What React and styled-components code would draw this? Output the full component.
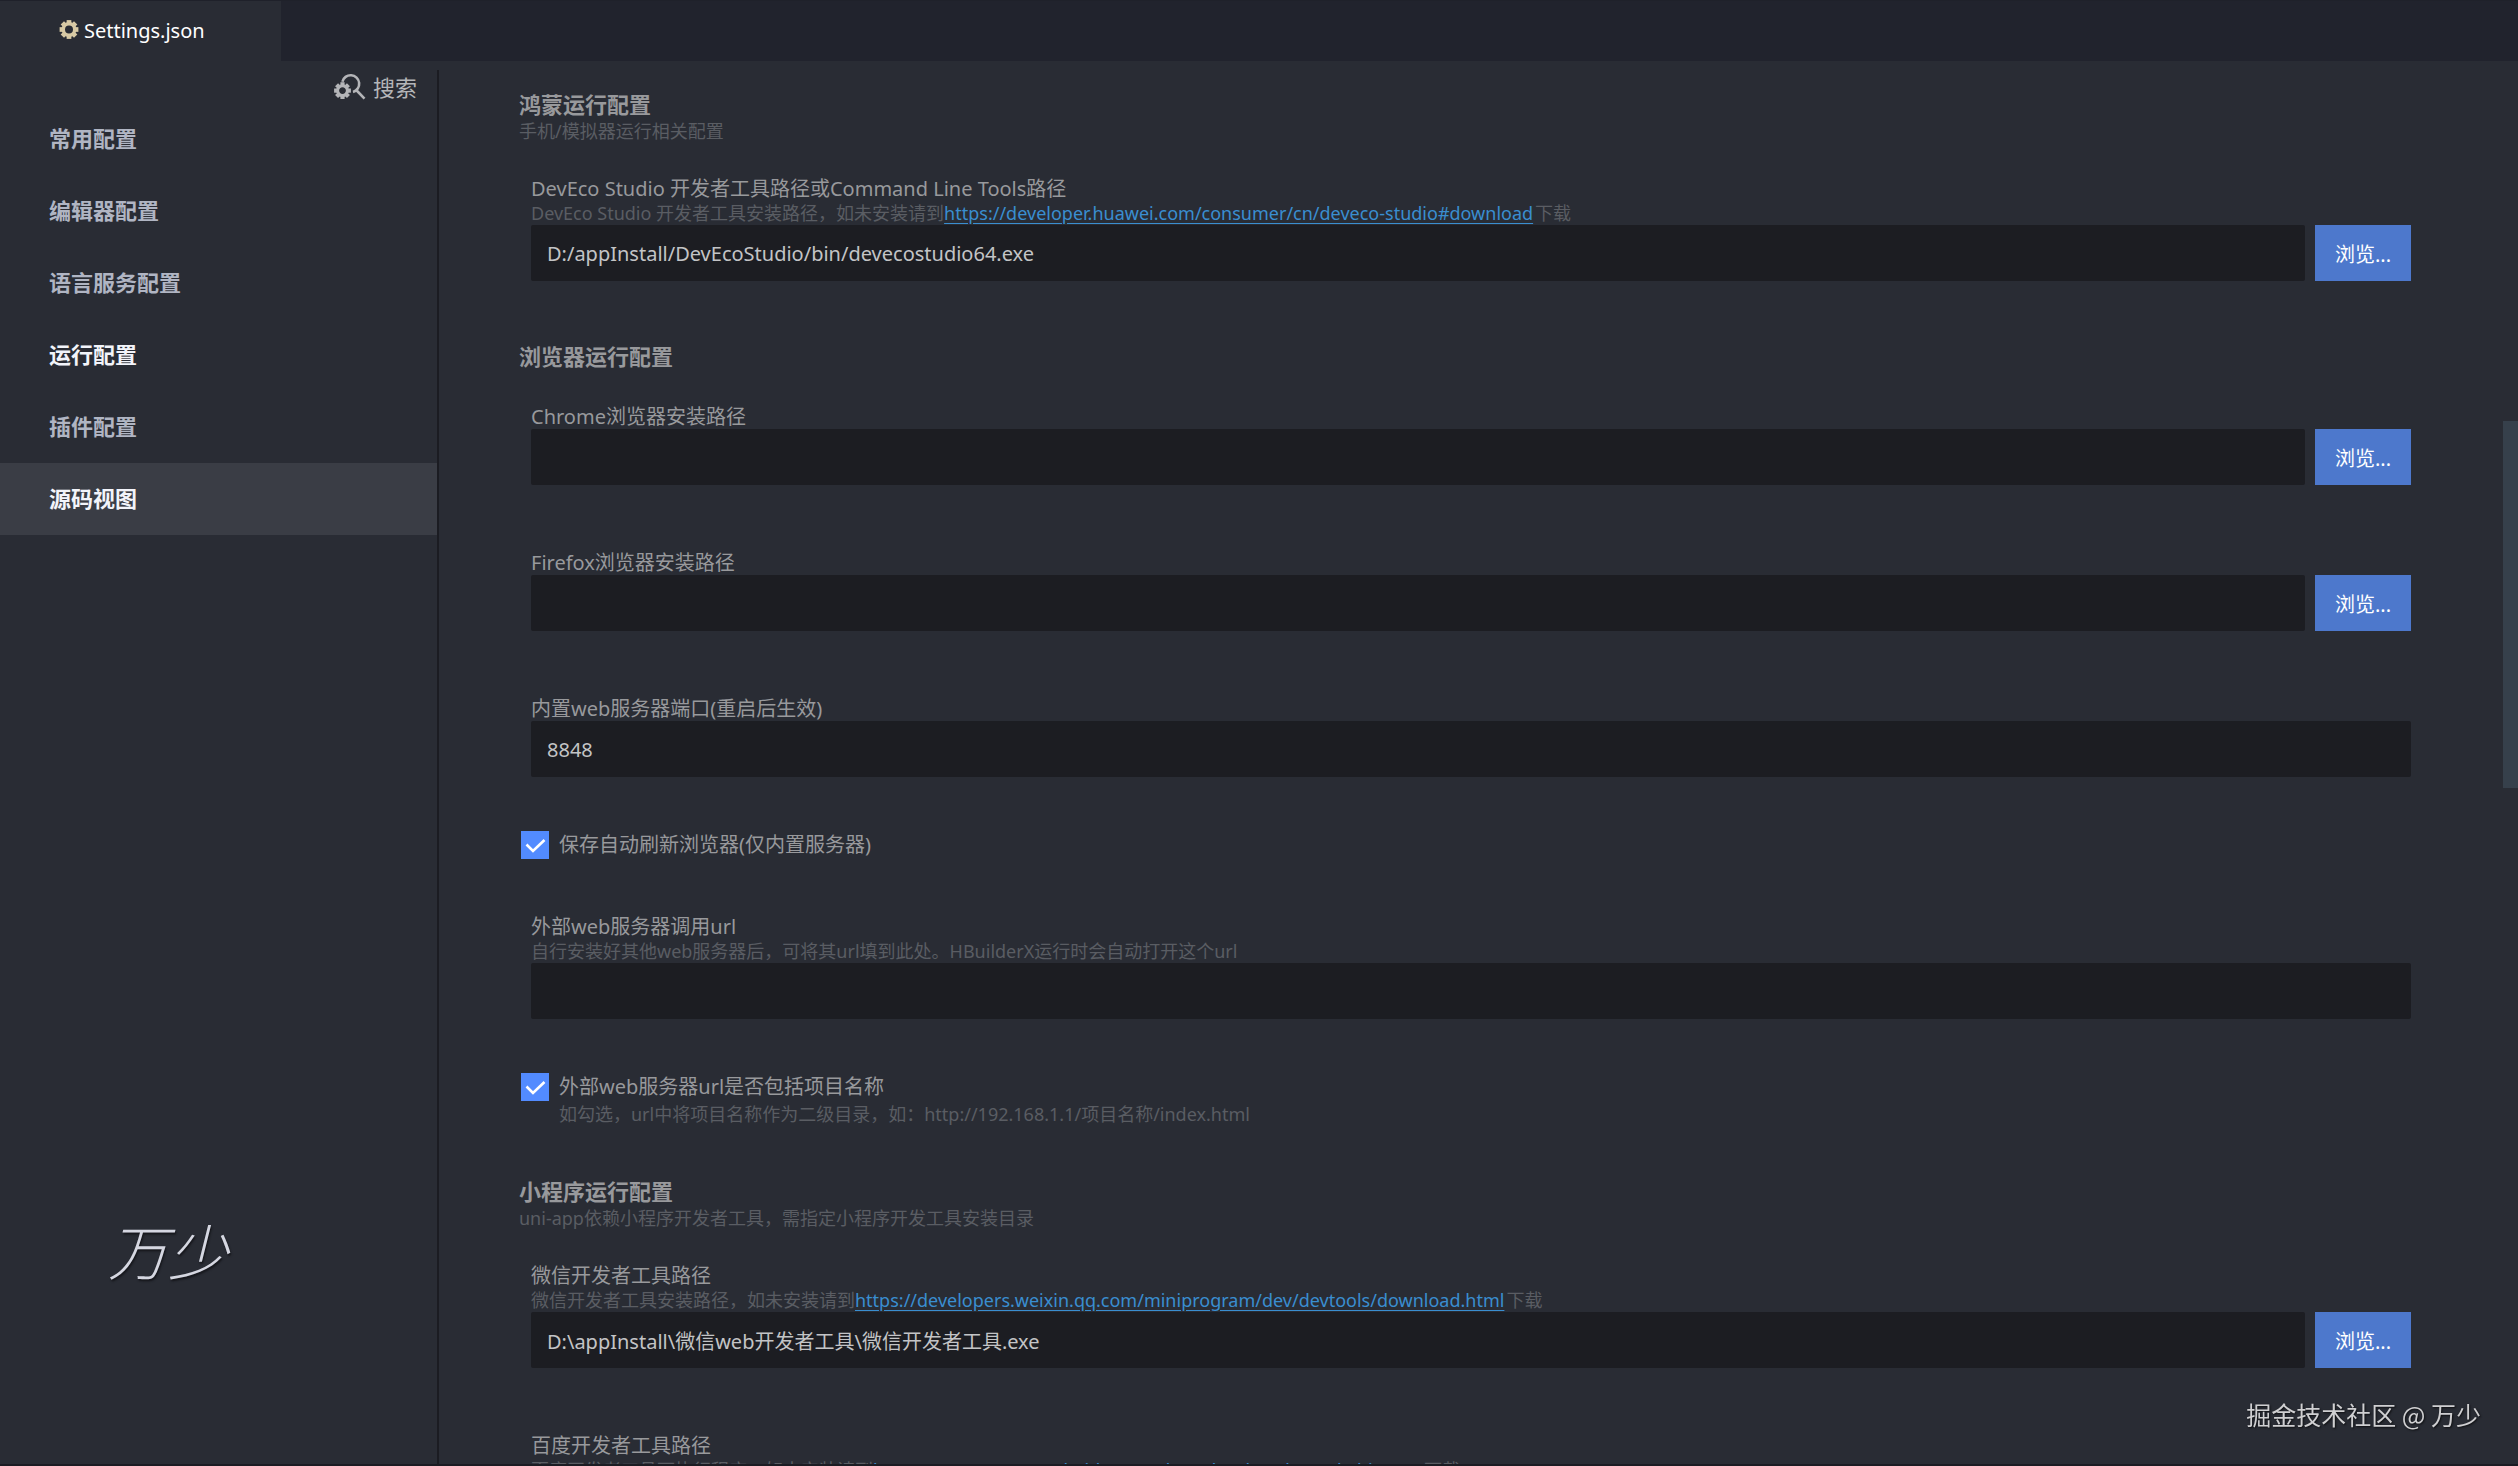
import React, { useId, useState } from "react";
import styled, { createGlobalStyle } from "styled-components";

const GlobalStyle = createGlobalStyle`
  * {
    box-sizing: border-box;
  }
  body {
    margin: 0;
    background: #292c34;
    font-family: "Noto Sans", "Noto Sans CJK SC", sans-serif;
    font-size: 20px;
    color: #98999c;
  }
  button, input {
    font: inherit;
    margin: 0;
    border: 0;
  }
`;

const Page = styled.div`
  display: flex;
  flex-direction: column;
  height: 100vh;
  overflow: hidden;
  background: #292c34;
  border-bottom: 2px solid #1b1c23;
`;

const TabBar = styled.div`
  flex: none;
  display: flex;
  height: 61px;
  background: #21232d;
  border-top: 1px solid #1f212a;
`;

const Tab = styled.button`
  display: flex;
  align-items: center;
  gap: 5px;
  width: 281px;
  padding: 0 0 2px 59px;
  background: #292c34;
  color: #fff;
`;

const Body = styled.div`
  flex: 1;
  display: flex;
  min-height: 0;
`;

const Sidebar = styled.aside`
  flex: none;
  display: flex;
  flex-direction: column;
  width: 439px;
  margin-top: 9px;
  border-right: 2px solid #1b1c22;
`;

const Search = styled.button`
  align-self: flex-end;
  display: flex;
  align-items: center;
  gap: 6px;
  height: 33px;
  padding: 0 20px 2px 0;
  background: none;
  color: #b4b5b8;
  font-size: 22px;
`;

const Nav = styled.nav`
  display: flex;
  flex-direction: column;
`;

const NavItem = styled.button`
  height: 72px;
  padding: 0 0 4px 49px;
  text-align: left;
  font-size: 22px;
  font-weight: 700;
  color: ${(p) => (p.$bright ? "#f2f4fa" : "#b0b5c3")};
  background: ${(p) => (p.$selected ? "#3a3d45" : "none")};
`;

const Signature = styled.div`
  margin: auto 0 175px 108px;
  font-family: "Noto Sans CJK SC", sans-serif;
  font-size: 60px;
  font-style: italic;
  font-weight: 300;
  line-height: 80px;
  color: #d5d7e1;
  text-shadow: 1px 2px 2px #15161b;
`;

const Content = styled.main`
  flex: 1;
  min-width: 0;
  overflow: hidden;
  padding: 22px 92px 0 80px;
`;

const Section = styled.section`
  padding-top: 8px;
`;

const SectionHead = styled.header`
  margin-bottom: 22px;
`;

const Title = styled.h2`
  margin: 0;
  padding-bottom: 2px;
  font-size: 22px;
  line-height: 26px;
  font-weight: 700;
  color: #98999c;
`;

const Desc = styled.p`
  margin: 0;
  font-size: 18px;
  line-height: 24px;
  color: #5a5d63;
  white-space: nowrap;
`;

const DescLink = styled.a`
  margin-right: 2px;
  color: #3a8ed0;
  text-underline-offset: 3px;
`;

const FieldBox = styled.div`
  padding: 12px 0 54px 12px;
`;

const Label = styled.label`
  display: block;
  line-height: 24px;
`;

const FieldRow = styled.div`
  display: flex;
  gap: 10px;
`;

const TextInput = styled.input`
  flex: 1;
  min-width: 0;
  height: 56px;
  padding: 0 16px;
  border-radius: 2px;
  background: #1c1d22;
  color: #c3c4c6;
  outline: none;
`;

const BrowseButton = styled.button`
  width: 96px;
  height: 56px;
  padding: 0;
  background: #4d78cc;
  color: #fff;
`;

const CheckBox = styled.div`
  display: grid;
  grid-template-columns: 28px 1fr;
  column-gap: 10px;
  padding: 0 0 44px 2px;

  label {
    line-height: 28px;
  }
  p {
    grid-column: 2;
    margin-top: 1px;
  }
`;

const Tick = styled.span`
  display: grid;
  width: 28px;
  height: 28px;

  input, svg {
    grid-area: 1 / 1;
    width: 28px;
    height: 28px;
  }
  input {
    appearance: none;
    background: #1c1d22;
  }
  input:checked {
    background: #528bff;
  }
  svg {
    pointer-events: none;
    visibility: hidden;
  }
  input:checked + svg {
    visibility: visible;
  }
`;

const ScrollTrack = styled.div`
  flex: none;
  display: flex;
  flex-direction: column;
  width: 15px;
`;

const ScrollSpace = styled.div`
  flex: ${(p) => p.$part};
`;

const ScrollThumb = styled.div`
  flex: 367;
  background: #36404b;
`;

const Watermark = styled.div`
  position: fixed;
  right: 37px;
  bottom: 34px;
  font-family: "Noto Sans CJK SC", sans-serif;
  font-size: 25px;
  line-height: 36px;
  color: #cfcfd1;
  text-shadow: 1px 1px 2px #0d0e10;
`;

function Gear({ cx, cy, r, hole }) {
  const body = r - 2;
  const mid = (body + hole) / 2;
  return (
    <g transform={`translate(${cx} ${cy})`}>
      <circle r={mid} fill="none" stroke="currentColor" strokeWidth={body - hole} />
      {[0, 45, 90, 135, 180, 225, 270, 315].map((a) => (
        <rect key={a} x={-r / 4} y={-r} width={r / 2} height={3} fill="currentColor" transform={`rotate(${a})`} />
      ))}
    </g>
  );
}

function SettingsIcon() {
  return (
    <svg width="20" height="20" viewBox="0 0 20 20" color="#d8caa5">
      <Gear cx={10} cy={9.5} r={9.4} hole={4} />
    </svg>
  );
}

function SearchIcon() {
  return (
    <svg width="34" height="28" viewBox="0 0 34 28">
      <Gear cx={9.5} cy={18.6} r={8.4} hole={3.4} />
      <path
        d="M9.4 9.8A8.5 8.5 0 1 1 20 19.9M23.2 18L31.5 26.6"
        fill="none"
        stroke="currentColor"
        strokeWidth="2.6"
      />
    </svg>
  );
}

function Field({ label, desc, link, value = "", browse }) {
  const id = useId();
  const [text, setText] = useState(value);
  return (
    <FieldBox>
      <Label htmlFor={id}>{label}</Label>
      {desc && (
        <Desc>
          {desc}
          {link && <DescLink href={link}>{link}</DescLink>}
          {link && "下载"}
        </Desc>
      )}
      <FieldRow>
        <TextInput id={id} type="text" value={text} onChange={(e) => setText(e.target.value)} />
        {browse && <BrowseButton type="button">浏览...</BrowseButton>}
      </FieldRow>
    </FieldBox>
  );
}

function CheckField({ label, desc }) {
  const id = useId();
  return (
    <CheckBox>
      <Tick>
        <input id={id} type="checkbox" defaultChecked />
        <svg viewBox="0 0 28 28">
          <path d="M5.5 13.5L12 20L23.5 9" fill="none" stroke="#fff" strokeWidth="2.6" />
        </svg>
      </Tick>
      <label htmlFor={id}>{label}</label>
      {desc && <Desc>{desc}</Desc>}
    </CheckBox>
  );
}

const navItems = [
  { name: "常用配置" },
  { name: "编辑器配置" },
  { name: "语言服务配置" },
  { name: "运行配置", bright: true },
  { name: "插件配置" },
  { name: "源码视图", bright: true, selected: true },
];

function App() {
  return (
    <Page>
      <GlobalStyle />
      <TabBar>
        <Tab type="button">
          <SettingsIcon />
          Settings.json
        </Tab>
      </TabBar>
      <Body>
        <Sidebar>
          <Search type="button">
            <SearchIcon />
            搜索
          </Search>
          <Nav>
            {navItems.map((item) => (
              <NavItem key={item.name} type="button" $bright={item.bright} $selected={item.selected}>
                {item.name}
              </NavItem>
            ))}
          </Nav>
          <Signature>万少</Signature>
        </Sidebar>
        <Content>
          <Section>
            <SectionHead>
              <Title>鸿蒙运行配置</Title>
              <Desc>手机/模拟器运行相关配置</Desc>
            </SectionHead>
            <Field
              label="DevEco Studio 开发者工具路径或Command Line Tools路径"
              desc="DevEco Studio 开发者工具安装路径，如未安装请到"
              link="https://developer.huawei.com/consumer/cn/deveco-studio#download"
              value="D:/appInstall/DevEcoStudio/bin/devecostudio64.exe"
              browse
            />
          </Section>
          <Section>
            <SectionHead>
              <Title>浏览器运行配置</Title>
            </SectionHead>
            <Field label="Chrome浏览器安装路径" browse />
            <Field label="Firefox浏览器安装路径" browse />
            <Field label="内置web服务器端口(重启后生效)" value="8848" />
            <CheckField label="保存自动刷新浏览器(仅内置服务器)" />
            <Field
              label="外部web服务器调用url"
              desc="自行安装好其他web服务器后，可将其url填到此处。HBuilderX运行时会自动打开这个url"
            />
            <CheckField
              label="外部web服务器url是否包括项目名称"
              desc="如勾选，url中将项目名称作为二级目录，如：http://192.168.1.1/项目名称/index.html"
            />
          </Section>
          <Section>
            <SectionHead>
              <Title>小程序运行配置</Title>
              <Desc>uni-app依赖小程序开发者工具，需指定小程序开发工具安装目录</Desc>
            </SectionHead>
            <Field
              label="微信开发者工具路径"
              desc="微信开发者工具安装路径，如未安装请到"
              link="https://developers.weixin.qq.com/miniprogram/dev/devtools/download.html"
              value="D:\appInstall\微信web开发者工具\微信开发者工具.exe"
              browse
            />
            <Field
              label="百度开发者工具路径"
              desc="百度开发者工具可执行程序，如未安装请到"
              link="https://smartprogram.baidu.com/docs/develop/devtools/history/"
              browse
            />
          </Section>
        </Content>
        <ScrollTrack>
          <ScrollSpace $part={360} />
          <ScrollThumb />
          <ScrollSpace $part={676} />
        </ScrollTrack>
      </Body>
      <Watermark>掘金技术社区 @ 万少</Watermark>
    </Page>
  );
}

export default App;
